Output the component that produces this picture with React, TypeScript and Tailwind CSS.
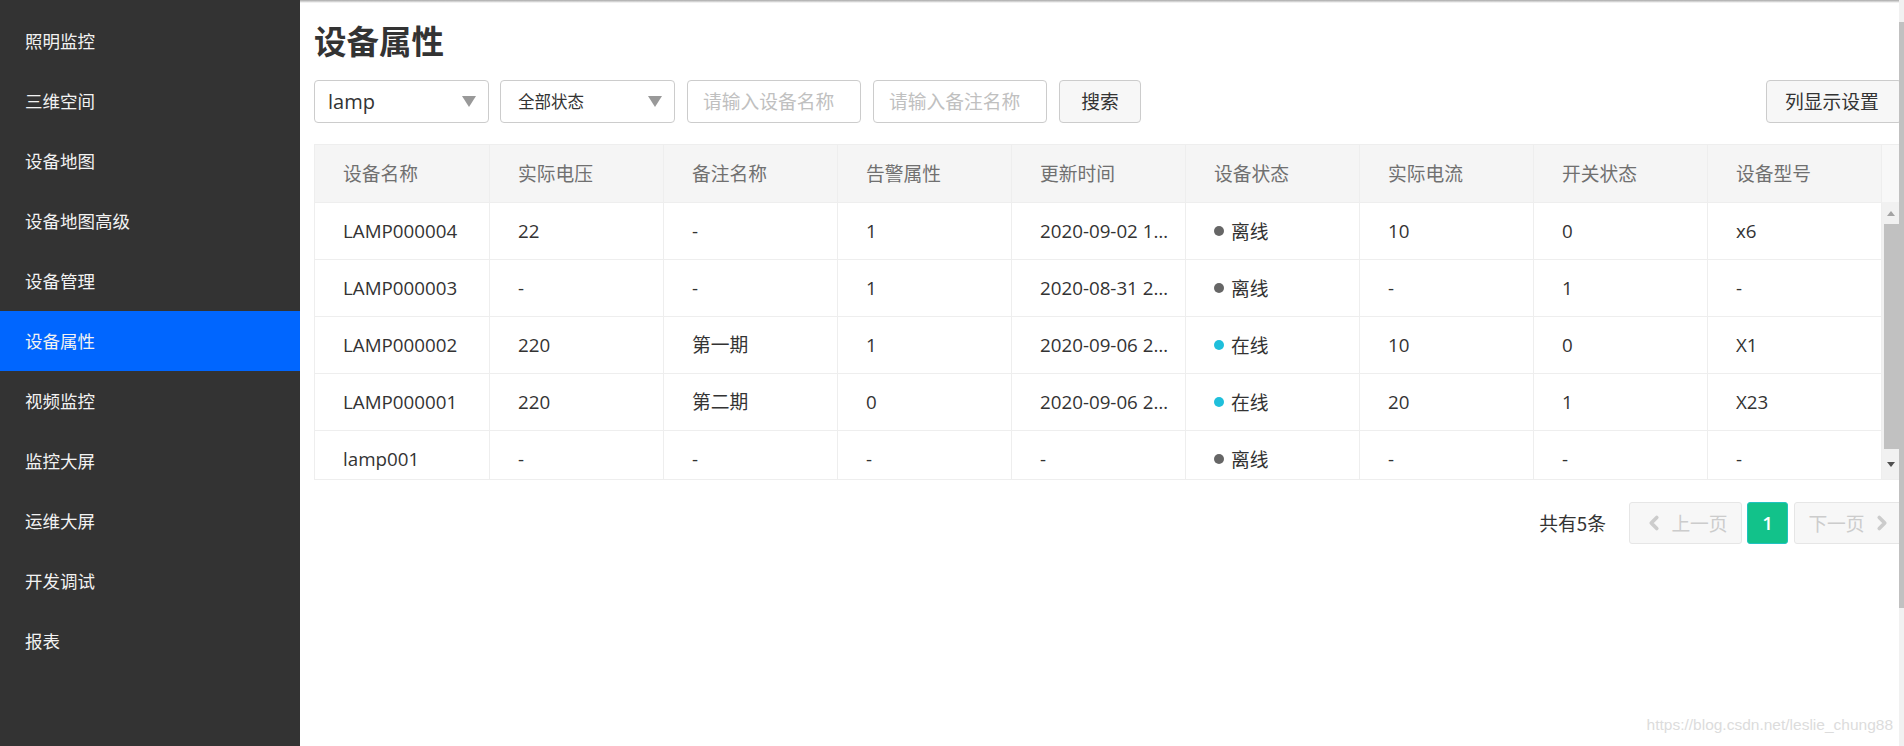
import React from "react";
import { ChevronLeft, ChevronRight } from "lucide-react";

const menu = ["照明监控", "三维空间", "设备地图", "设备地图高级", "设备管理", "设备属性", "视频监控", "监控大屏", "运维大屏", "开发调试", "报表"];

const headers = ["设备名称", "实际电压", "备注名称", "告警属性", "更新时间", "设备状态", "实际电流", "开关状态", "设备型号"];

type Row = { name: string; v: string; note: string; alarm: string; time: string; online: boolean; cur: string; sw: string; model: string };

const rows: Row[] = [
  { name: "LAMP000004", v: "22", note: "-", alarm: "1", time: "2020-09-02 10:21:35", online: false, cur: "10", sw: "0", model: "x6" },
  { name: "LAMP000003", v: "-", note: "-", alarm: "1", time: "2020-08-31 21:10:02", online: false, cur: "-", sw: "1", model: "-" },
  { name: "LAMP000002", v: "220", note: "第一期", alarm: "1", time: "2020-09-06 22:15:40", online: true, cur: "10", sw: "0", model: "X1" },
  { name: "LAMP000001", v: "220", note: "第二期", alarm: "0", time: "2020-09-06 22:15:41", online: true, cur: "20", sw: "1", model: "X23" },
  { name: "lamp001", v: "-", note: "-", alarm: "-", time: "-", online: false, cur: "-", sw: "-", model: "-" },
];

const cellCls = "flex items-center pl-[28px] pr-[10px] border-r border-[#eeeeee] overflow-hidden";
const cjk = { fontFamily: '"Noto Sans CJK SC", sans-serif' };

export default function App() {
  return (
    <div
      className="w-[1904px] h-[746px] flex overflow-hidden bg-white"
      style={{ fontFamily: '"Open Sans", "Noto Sans CJK SC", sans-serif' }}
    >
      {/* Sidebar */}
      <div className="w-[300px] shrink-0 h-full bg-[#333333] pt-[11px] flex flex-col">
        {menu.map((m) => (
          <div
            key={m}
            className={`h-[60px] shrink-0 flex items-center pl-[25px] text-[17.5px] text-[#f2f2f2] ${m === "设备属性" ? "bg-[#0066ff]" : ""}`}
            style={cjk}
          >
            {m}
          </div>
        ))}
      </div>

      {/* Main */}
      <div className="relative flex-1 h-full overflow-hidden">
        <div className="absolute top-0 left-0 right-0 h-[3px] bg-gradient-to-b from-[#a8a8a8] to-[#ffffff]" />
        <div className="pl-[14px] pt-[19px] w-[1599px]">
          <h1 className="text-[32.5px] leading-[42px] font-bold text-[#333333]" style={cjk}>
            设备属性
          </h1>

          {/* Filters */}
          <div className="mt-[19px] h-[43px] flex items-stretch">
            <div className="w-[175px] border border-[#cccccc] rounded-[4px] flex items-center justify-between pl-[13px] pr-[12px]">
              <span className="text-[20px] text-[#333333]">lamp</span>
              <span className="w-0 h-0 border-l-[7px] border-r-[7px] border-t-[11px] border-l-transparent border-r-transparent border-t-[#999999]" />
            </div>
            <div className="ml-[11px] w-[175px] border border-[#cccccc] rounded-[4px] flex items-center justify-between pl-[17px] pr-[12px]">
              <span className="text-[16.5px] text-[#333333]" style={cjk}>全部状态</span>
              <span className="w-0 h-0 border-l-[7px] border-r-[7px] border-t-[11px] border-l-transparent border-r-transparent border-t-[#999999]" />
            </div>
            <div className="ml-[12px] w-[174px] border border-[#cccccc] rounded-[4px] flex items-center pl-[15px]">
              <span className="text-[18.75px] text-[#c0c0c0]" style={cjk}>请输入设备名称</span>
            </div>
            <div className="ml-[12px] w-[174px] border border-[#cccccc] rounded-[4px] flex items-center pl-[15px]">
              <span className="text-[18.75px] text-[#c0c0c0]" style={cjk}>请输入备注名称</span>
            </div>
            <div className="ml-[12px] w-[82px] border border-[#cccccc] rounded-[4px] bg-[#f7f7f7] flex items-center justify-center">
              <span className="text-[18.75px] text-[#333333]" style={cjk}>搜索</span>
            </div>
            <div className="flex-1" />
            <div className="w-[136px] mr-[-3px] border border-[#cccccc] rounded-[4px] bg-[#f7f7f7] flex items-center pl-[18px]">
              <span className="text-[18.75px] text-[#333333]" style={cjk}>列显示设置</span>
            </div>
          </div>

          {/* Table */}
          <div className="mt-[21px] w-[1585px] border-l border-t border-b border-[#eeeeee]">
            <div className="flex h-[57px] bg-[#f5f5f5]">
              <div className="grid grid-cols-[175px_repeat(8,174px)] w-[1567px]">
                {headers.map((h) => (
                  <div key={h} className={`${cellCls} text-[18.75px] text-[#707070]`} style={cjk}>
                    {h}
                  </div>
                ))}
              </div>
              <div className="w-[17px] bg-[#f8f8f8]" />
            </div>
            <div className="flex h-[277px] overflow-hidden">
              <div className="w-[1567px]">
                {rows.map((r) => (
                  <div key={r.name} className="grid grid-cols-[175px_repeat(8,174px)] h-[57px] shrink-0 border-t border-[#eeeeee] text-[18.75px] text-[#333333]">
                    <div className={cellCls}>{r.name}</div>
                    <div className={cellCls}>{r.v}</div>
                    <div className={cellCls}>{r.note}</div>
                    <div className={cellCls}>{r.alarm}</div>
                    <div className={cellCls}>
                      <span className="truncate">{r.time}</span>
                    </div>
                    <div className={cellCls}>
                      <span className={`w-[10px] h-[10px] rounded-full mr-[7px] shrink-0 ${r.online ? "bg-[#1fbfdb]" : "bg-[#666666]"}`} />
                      <span style={cjk}>{r.online ? "在线" : "离线"}</span>
                    </div>
                    <div className={cellCls}>{r.cur}</div>
                    <div className={cellCls}>{r.sw}</div>
                    <div className={cellCls}>{r.model}</div>
                  </div>
                ))}
              </div>
              {/* inner scrollbar */}
              <div className="w-[17px] h-full bg-[#f1f1f1] flex flex-col items-center">
                <div className="h-[22px] w-full flex items-center justify-center">
                  <span className="w-0 h-0 border-l-[4px] border-r-[4px] border-b-[5px] border-l-transparent border-r-transparent border-b-[#a3a3a3]" />
                </div>
                <div className="w-[15px] ml-[2px] h-[225px] bg-[#c1c1c1]" />
                <div className="flex-1 w-full flex items-center justify-center">
                  <span className="w-0 h-0 border-l-[4px] border-r-[4px] border-t-[5px] border-l-transparent border-r-transparent border-t-[#505050]" />
                </div>
              </div>
            </div>
          </div>

          {/* Pagination */}
          <div className="mt-[22px] h-[42px] flex items-center justify-end mr-[-8px]">
            <span className="text-[18.75px] text-[#333333] mr-[23px]" style={cjk}>共有5条</span>
            <div className="w-[113px] h-[42px] border border-[#e6e6e6] rounded-[3px] bg-[#f7f7f7] flex items-center justify-center gap-[6px] text-[#cccccc]">
              <ChevronLeft size={22} strokeWidth={4} />
              <span className="text-[18.75px]" style={cjk}>上一页</span>
            </div>
            <div className="ml-[5px] w-[41px] h-[42px] rounded-[3px] border border-[#20c3c0] bg-[#12c28a] flex items-center justify-center text-white text-[18.75px] font-semibold">
              1
            </div>
            <div className="ml-[6px] w-[113px] h-[42px] border border-[#e6e6e6] rounded-[3px] bg-[#f7f7f7] flex items-center justify-center gap-[6px] text-[#cccccc]">
              <span className="text-[18.75px]" style={cjk}>下一页</span>
              <ChevronRight size={22} strokeWidth={4} />
            </div>
          </div>
        </div>

        {/* watermark */}
        <div
          className="absolute right-[6px] bottom-[10px] text-[15.5px] text-[#dcdcdc]"
          style={{ fontFamily: '"Liberation Sans", Arial, sans-serif' }}
        >
          https://blog.csdn.net/leslie_chung88
        </div>
      </div>

      {/* page scrollbar */}
      <div className="w-[5px] shrink-0 h-full bg-[#f1f1f1] flex flex-col">
        <div className="h-[22px]" />
        <div className="h-[586px] bg-[#c1c1c1]" />
      </div>
    </div>
  );
}
